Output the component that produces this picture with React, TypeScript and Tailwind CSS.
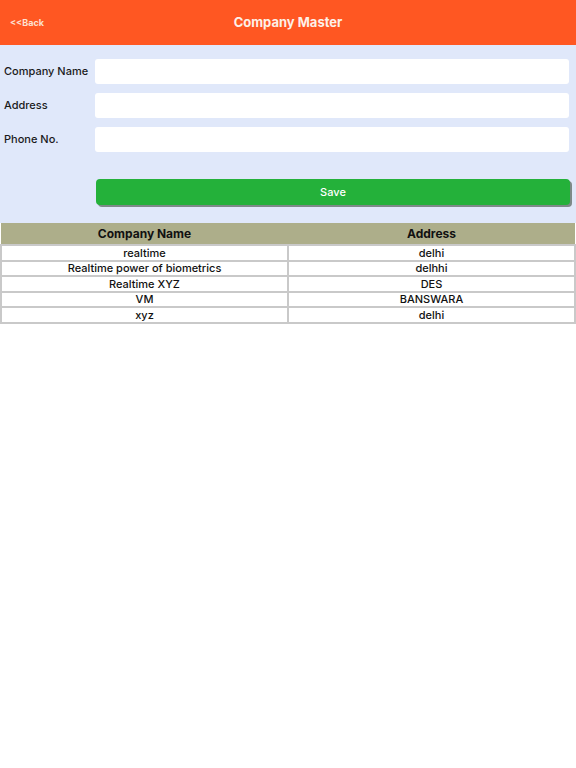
import React from 'react';

const rows = [
  { name: 'realtime', address: 'delhi' },
  { name: 'Realtime power of biometrics', address: 'delhhi' },
  { name: 'Realtime XYZ', address: 'DES' },
  { name: 'VM', address: 'BANSWARA' },
  { name: 'xyz', address: 'delhi' },
];

const fields = ['Company Name', 'Address', 'Phone No.'];

export default function App() {
  return (
    <div className="min-h-[768px] bg-white" style={{ fontFamily: 'Inter, "Noto Sans", sans-serif' }}>
      <header className="h-[45px] bg-[#ff5722] flex items-center relative">
        <button className="absolute left-[10px] text-[9px] font-bold text-[#fde0d0]">&lt;&lt;Back</button>
        <h1 className="flex-1 text-center text-[13px] font-bold text-[#fdf0e8]">Company Master</h1>
      </header>

      <div className="bg-[#e0e8fa] pt-[14px] pb-[18px]">
        <div className="flex flex-col gap-[9px]">
          {fields.map((f) => (
            <div key={f} className="flex items-center h-[25px]">
              <label className="w-[95px] pl-[4px] text-[11px] font-medium text-[#1a1a1a]">{f}</label>
              <input className="h-[25px] w-[474px] bg-white rounded-[3px] outline-none" />
            </div>
          ))}
        </div>
        <div className="pl-[96px] pr-[6px] mt-[26px]">
          <button className="w-full h-[26px] bg-[#24b13a] rounded-[4px] text-white text-[11px] font-medium shadow-[2px_2px_0_#7d8a88]">
            Save
          </button>
        </div>
      </div>

      <table className="w-full border-collapse text-[#111]">
        <thead>
          <tr className="bg-[#adae8a] h-[22px]">
            <th className="w-1/2 text-[12px] font-bold">Company Name</th>
            <th className="w-1/2 text-[12px] font-bold">Address</th>
          </tr>
        </thead>
        <tbody>
          {rows.map((r, i) => (
            <tr key={i} className="h-[15.5px]">
              <td className="border-2 border-[#c9c9c9] text-center text-[11px] font-medium leading-[11px]">{r.name}</td>
              <td className="border-2 border-[#c9c9c9] text-center text-[11px] font-medium leading-[11px]">{r.address}</td>
            </tr>
          ))}
        </tbody>
      </table>
    </div>
  );
}
